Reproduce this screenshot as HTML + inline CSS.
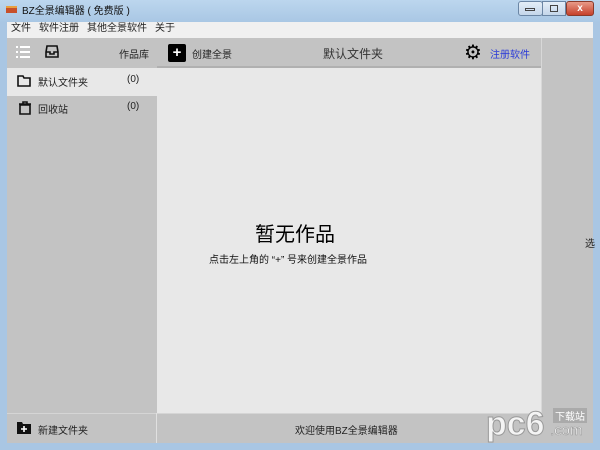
<!DOCTYPE html>
<html><head><meta charset="utf-8"><style>
*{margin:0;padding:0;box-sizing:border-box}
body{width:600px;height:450px;overflow:hidden;position:relative;background:#a9c6e3;font-family:"Liberation Sans","Noto Sans CJK SC",sans-serif;font-size:10px;color:#222}
.a{position:absolute}
.title{left:0;top:0;width:600px;height:22px;background:linear-gradient(#bcd6ee,#a9c7e4)}
.menu{left:7px;top:22px;width:586px;height:16px;background:#f0f0f0}
.menu span{margin-left:4px;margin-right:4px;line-height:14px}
</style></head><body>
<div class="a title"></div>
<div class="a" style="left:6px;top:6px;width:11px;height:7px;background:#c8502a;border-top:2px solid #e8a040"></div>
<div class="a" style="left:22px;top:2px;font-size:10px;color:#111">BZ全景编辑器 ( 免费版 )</div>
<div class="a" style="left:518px;top:1px;width:25px;height:15px;border:1px solid #6b86a5;border-radius:3px;background:linear-gradient(#e4eef8,#c4d6ea)"></div>
<div class="a" style="left:525px;top:8px;width:10px;height:3px;border:1px solid #444"></div>
<div class="a" style="left:542px;top:1px;width:24px;height:15px;border:1px solid #6b86a5;background:linear-gradient(#e4eef8,#c4d6ea)"></div>
<div class="a" style="left:550px;top:5px;width:8px;height:7px;border:1px solid #444"></div>
<div class="a" style="left:566px;top:1px;width:28px;height:15px;border:1px solid #8a3a2a;border-radius:3px;background:linear-gradient(#e89a88,#c6402a);color:#fff;font-weight:bold;text-align:center;line-height:13px;font-size:10px">x</div>
<div class="a menu"><span>文件</span><span>软件注册</span><span>其他全景软件</span><span>关于</span></div>
<div class="a" style="left:7px;top:38px;width:150px;height:30px;background:#c3c3c3"></div>
<svg class="a" style="left:16px;top:45px" width="16" height="14"><g fill="#fff"><rect x="0" y="1" width="2" height="2"/><rect x="4" y="1" width="10" height="2"/><rect x="0" y="6" width="2" height="2"/><rect x="4" y="6" width="10" height="2"/><rect x="0" y="11" width="2" height="2"/><rect x="4" y="11" width="10" height="2"/></g></svg>
<svg class="a" style="left:45px;top:45px" width="14" height="13"><path d="M2 1h10l1 6v5H1V7z M1 7h4v2h4V7h4" fill="none" stroke="#111" stroke-width="1.6"/></svg>
<div class="a" style="left:119px;top:46px">作品库</div>
<div class="a" style="left:7px;top:68px;width:150px;height:28px;background:#e8e8e8"></div>
<svg class="a" style="left:17px;top:75px" width="14" height="12"><path d="M1 1h5l1 2h6v8H1z" fill="none" stroke="#111" stroke-width="1.6"/></svg>
<div class="a" style="left:38px;top:74px">默认文件夹</div>
<div class="a" style="left:127px;top:74px">(0)</div>
<div class="a" style="left:7px;top:96px;width:150px;height:317px;background:#c3c3c3"></div>
<svg class="a" style="left:18px;top:101px" width="14" height="14"><path d="M1 3h12M5 3V1h4v2M2 4h10v9H2z" fill="none" stroke="#111" stroke-width="1.6"/></svg>
<div class="a" style="left:38px;top:101px">回收站</div>
<div class="a" style="left:127px;top:101px">(0)</div>
<div class="a" style="left:157px;top:38px;width:385px;height:30px;background:#c3c3c3;border-bottom:2px solid #b0b0b0"></div>
<div class="a" style="left:168px;top:44px;width:18px;height:18px;background:#000;border-radius:2px;color:#fff;font-weight:bold;text-align:center;line-height:17px;font-size:15px">+</div>
<div class="a" style="left:192px;top:46px">创建全景</div>
<div class="a" style="left:323px;top:45px;font-size:12px;color:#333">默认文件夹</div>
<div class="a" style="left:464px;top:43px;font-size:20px;line-height:20px;color:#000">⚙</div>
<div class="a" style="left:490px;top:46px;color:#2a3ad8">注册软件</div>
<div class="a" style="left:157px;top:68px;width:385px;height:345px;background:#e8e8e8"></div>
<div class="a" style="left:255px;top:218px;font-size:20px;color:#000">暂无作品</div>
<div class="a" style="left:209px;top:251px;font-size:10px;color:#111">点击左上角的 “+” 号来创建全景作品</div>
<div class="a" style="left:541px;top:38px;width:52px;height:405px;background:#c3c3c3;border-left:1px solid #d8d8d8"></div>
<div class="a" style="left:585px;top:235px">选</div>
<div class="a" style="left:7px;top:413px;width:535px;height:30px;background:#c3c3c3;border-top:1px solid #d5d5d5"></div>
<div class="a" style="left:156px;top:413px;width:1px;height:30px;background:#e0e0e0"></div>
<svg class="a" style="left:17px;top:422px" width="14" height="12"><path d="M0 0h5l1 2h8v10H0z" fill="#111"/><path d="M7 4v6M4 7h6" stroke="#fff" stroke-width="1.6"/></svg>
<div class="a" style="left:38px;top:422px">新建文件夹</div>
<div class="a" style="left:295px;top:422px">欢迎使用BZ全景编辑器</div>
<div class="a" style="left:486px;top:405px;font-size:34px;font-weight:bold;color:#f4f4f4;font-family:'Liberation Sans',sans-serif;-webkit-text-stroke:1px #999">pc6</div>
<div class="a" style="left:553px;top:408px;color:#fff;background:#aaa;padding:0 2px">下载站</div>
<div class="a" style="left:550px;top:422px;font-size:15px;color:#fff;-webkit-text-stroke:.6px #999">.com</div>
</body></html>
